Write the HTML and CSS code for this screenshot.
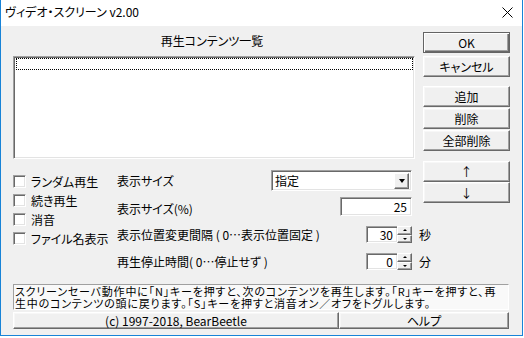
FILE: index.html
```html
<!DOCTYPE html>
<html lang="ja">
<head>
  <meta charset="UTF-8">
  <meta name="viewport" content="width=device-width, initial-scale=1.0">
  <title>ヴィデオ・スクリーン v2.00</title>
  <link rel="stylesheet" href="styles.css">
</head>
<body>
  <div class="window">
    <div class="titlebar">
      <span class="title">ヴィデオ・スクリーン v2.00</span>
      <span class="close">
        <svg width="11" height="11" viewBox="0 0 11 11"><path d="M0.5 0.5 L10.5 10.5 M10.5 0.5 L0.5 10.5" stroke="#000" stroke-width="1"/></svg>
      </span>
    </div>

    <div class="client">
      <div class="top">
        <div class="list-area">
          <div class="heading">再生コンテンツ一覧</div>
          <div class="list">
            <div class="focus-row"></div>
          </div>
        </div>
        <div class="side">
          <div class="btn default btn-ok">OK</div>
          <div class="btn btn-cancel">キャンセル</div>
          <div class="btn btn-add">追加</div>
          <div class="btn btn-tight">削除</div>
          <div class="btn btn-tight">全部削除</div>
        </div>
      </div>

      <div class="middle">
        <div class="checks">
          <label class="check"><span class="box"></span>ランダム再生</label>
          <label class="check"><span class="box"></span>続き再生</label>
          <label class="check"><span class="box"></span>消音</label>
          <label class="check"><span class="box"></span>ファイル名表示</label>
        </div>

        <div class="form">
          <div class="row row-1">
            <span class="label">表示サイズ</span>
            <div class="field select">
              <span class="select-text">指定</span>
              <span class="drop"><span class="tri-down"></span></span>
            </div>
          </div>
          <div class="row row-2">
            <span class="label label-low">表示サイズ(%)</span>
            <div class="field number">25</div>
          </div>
          <div class="row row-3">
            <span class="label">表示位置変更間隔 ( 0…表示位置固定 )</span>
            <div class="spin">
              <div class="field spin-val">30</div>
              <div class="spin-btns">
                <span class="spin-btn"><span class="tri-up"></span></span>
                <span class="spin-btn"><span class="tri-down small"></span></span>
              </div>
            </div>
            <span class="unit">秒</span>
          </div>
          <div class="row row-4">
            <span class="label">再生停止時間( 0…停止せず )</span>
            <div class="spin">
              <div class="field spin-val">0</div>
              <div class="spin-btns">
                <span class="spin-btn"><span class="tri-up"></span></span>
                <span class="spin-btn"><span class="tri-down small"></span></span>
              </div>
            </div>
            <span class="unit">分</span>
          </div>
        </div>

        <div class="side arrows">
          <div class="btn">↑</div>
          <div class="btn">↓</div>
        </div>
      </div>

      <div class="note">
        <div class="note-line">スクリーンセーバ動作中に「N」キーを押すと、次のコンテンツを再生します。「R」キーを押すと、再</div>
        <div class="note-line">生中のコンテンツの頭に戻ります。「S」キーを押すと消音オン／オフをトグルします。</div>
      </div>

      <div class="footer">
        <div class="btn copy">(c) 1997-2018, BearBeetle</div>
        <div class="btn help">ヘルプ</div>
      </div>
    </div>
  </div>
</body>
</html>
```

FILE: styles.css
```css
body {
  margin: 0;
  background-color: #fff;
  font-family: "Noto Sans CJK JP", "Noto Sans", sans-serif;
  font-size: 12px;
  color: #000;
  font-feature-settings: "palt";
}
.window {
  width: 523px;
  height: 336px;
  box-sizing: border-box;
  border: 1px solid #1883d7;
  border-top: 0;
  display: flex;
  flex-direction: column;
}
.titlebar {
  height: 26px;
  background-color: #fff;
  display: flex;
  align-items: center;
  padding-left: 4px;
}
.title {
  font-size: 12px;
  line-height: 14px;
  margin-top: -2px;
}
.close {
  margin-left: auto;
  width: 30px;
  display: flex;
  justify-content: center;
  margin-top: -2px;
}
.client {
  flex: 1;
  background-color: #f0f0f0;
  padding: 0 12px;
}

/* buttons */
.btn {
  box-sizing: border-box;
  height: 21px;
  background-color: #f0f0f0;
  border: 1px solid;
  border-color: #fff #696969 #696969 #fff;
  box-shadow: inset -1px -1px 0 #a0a0a0, inset 1px 1px 0 #f7f7f7;
  display: flex;
  align-items: center;
  justify-content: center;
  line-height: 14px;
  white-space: nowrap;
}
.btn.default {
  border-color: #646464;
  box-shadow: inset 1px 1px 0 #fff, inset -1px -1px 0 #696969, inset -2px -2px 0 #a0a0a0;
}

/* sunken fields */
.field, .list, .box {
  box-sizing: border-box;
  background-color: #fff;
  border: 1px solid;
  border-color: #a0a0a0 #fff #fff #a0a0a0;
  box-shadow: inset 1px 1px 0 #696969, inset -1px -1px 0 #e3e3e3;
}

.top {
  display: flex;
  gap: 8px;
}
.list-area {
  width: 402px;
}
.heading {
  height: 30px;
  display: flex;
  align-items: center;
  justify-content: center;
  line-height: 14px;
  padding-right: 4px;
  box-sizing: border-box;
}
.list {
  height: 103px;
  padding: 1px 1px 0 2px;
}
.focus-row {
  height: 12px;
  box-sizing: border-box;
  border: 1px dotted #000;
}
.side {
  width: 87px;
  display: flex;
  flex-direction: column;
  padding-top: 6px;
}
.btn-cancel {
  margin-top: 3px;
}
.btn-add {
  margin-top: 9px;
}
.btn-tight {
  margin-top: 1px;
}

.middle {
  display: flex;
  margin-top: 2px;
  height: 110px;
}
.checks {
  width: 104px;
  padding-top: 11px;
  display: flex;
  flex-direction: column;
}
.check {
  height: 19px;
  display: flex;
  align-items: center;
  gap: 5px;
  line-height: 14px;
}
.box {
  width: 13px;
  height: 13px;
}
.form {
  width: 298px;
  padding-right: 3px;
  box-sizing: border-box;
}
.row {
  display: flex;
  align-items: center;
  line-height: 14px;
}
.row-1 {
  height: 21px;
  margin-top: 9px;
}
.row-2 {
  height: 19px;
  margin-top: 6px;
}
.row-3 {
  height: 17px;
  margin-top: 10px;
}
.row-4 {
  height: 17px;
  margin-top: 10px;
}
.label {
  white-space: nowrap;
}
.label-low {
  margin-top: 5px;
}
.select {
  margin-left: auto;
  width: 141px;
  height: 21px;
  display: flex;
  align-items: center;
  padding: 2px 2px 2px 3px;
}
.select-text {
  flex: 1;
}
.drop, .spin-btn {
  box-sizing: border-box;
  background-color: #f0f0f0;
  border: 1px solid;
  border-color: #fff #696969 #696969 #fff;
  box-shadow: inset -1px -1px 0 #a0a0a0;
  display: flex;
  align-items: center;
  justify-content: center;
}
.drop {
  width: 15px;
  height: 16px;
}
.tri-down {
  width: 0;
  height: 0;
  border-left: 3px solid transparent;
  border-right: 3px solid transparent;
  border-top: 4px solid #000;
}
.tri-down.small, .tri-up {
  border-left-width: 2px;
  border-right-width: 2px;
  border-top-width: 2px;
}
.tri-up {
  width: 0;
  height: 0;
  border-left: 2px solid transparent;
  border-right: 2px solid transparent;
  border-bottom: 2px solid #000;
}
.number {
  margin-left: auto;
  width: 72px;
  height: 19px;
  text-align: right;
  padding: 2px 4px 0 0;
  line-height: 14px;
}
.spin {
  margin-left: auto;
  display: flex;
  height: 17px;
}
.spin-val {
  width: 31px;
  height: 17px;
  text-align: right;
  padding: 1px 4px 0 0;
  line-height: 14px;
  border-right: 0;
}
.spin-btns {
  width: 15px;
  display: flex;
  flex-direction: column;
}
.spin-btn {
  height: 8.5px;
}
.unit {
  width: 12px;
  margin-left: 7px;
  margin-right: -19px;
}
.arrows {
  margin-left: 8px;
  padding-top: 0;
}

.note {
  margin-top: 13px;
  height: 26px;
  box-sizing: border-box;
  background-color: #f9f9f9;
  border: 1px solid;
  border-color: #a0a0a0 #fff #fff #a0a0a0;
  padding-left: 1px;
  width: 496px;
}
.note-line {
  font-size: 11px;
  line-height: 12px;
  letter-spacing: 0.8px;
  white-space: nowrap;
}
.footer {
  display: flex;
  margin-top: 2px;
  width: 496px;
}
.btn.copy, .btn.help {
  height: 17px;
}
.copy {
  width: 326px;
}
.help {
  flex: 1;
}
```
